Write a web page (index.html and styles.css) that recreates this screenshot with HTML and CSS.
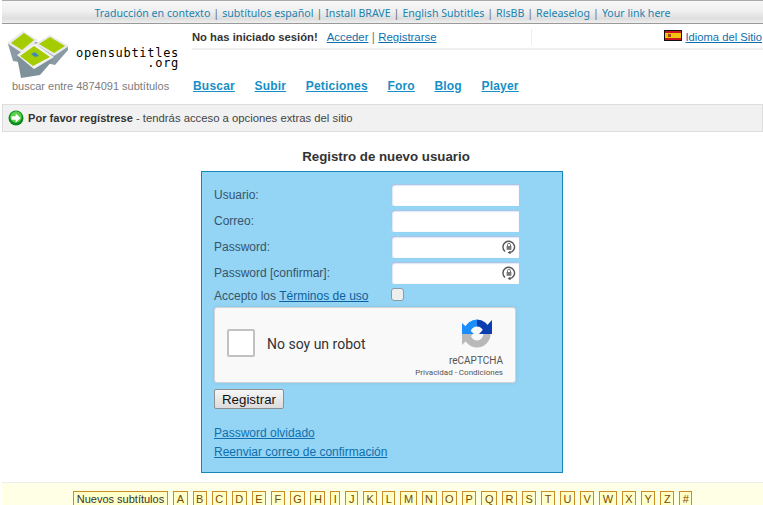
FILE: index.html
```html
<!DOCTYPE html>
<html lang="es">
<head>
<meta charset="utf-8">
<title>Registro de nuevo usuario</title>
<link rel="stylesheet" href="styles.css">
</head>
<body>
<div class="topbar">
  <a>Traducción en contexto</a><i>|</i><a>subtítulos español</a><i>|</i><a>Install BRAVE</a><i>|</i><a>English Subtitles</a><i>|</i><a>RlsBB</a><i>|</i><a>Releaselog</a><i>|</i><a>Your link here</a>
</div>
<header class="head">
  <div class="brand">
    <div class="logo">
      <svg class="logo-mark" viewBox="5 28 70 52" width="70" height="52">
        <g>
          <polygon points="8,44 13,61 30,64 38,42" fill="#8a9ba3"/>
          <polygon points="7,43 23,31 38,40 22,53" fill="#e9e9e9"/>
          <polygon points="11,43 24,33 34,40 22,50" fill="#a4cc00"/>
        </g>
        <g>
          <polygon points="37,46 42,62 55,65 68,50 68,46" fill="#8a9ba3"/>
          <polygon points="35,44 50,35 69,46 54,56" fill="#e9e9e9"/>
          <polygon points="39,44 50,37 65,46 54,53" fill="#a4cc00"/>
        </g>
        <g>
          <polygon points="17,57 21,78 40,75 53,60" fill="#7f929b"/>
          <polygon points="17,55 34,43 54,57 34,69" fill="#f2f2f2"/>
          <polygon points="20,56 34,46 50,57 33,66" fill="#a4cc00"/>
          <polygon points="31,54 35,52 39,56 35,57" fill="#3a8ac0"/>
        </g>
      </svg>
      <div class="wordmark"><span>opensubtitles</span><span class="org">.org</span></div>
    </div>
    <p class="count">buscar entre 4874091 subtítulos</p>
  </div>
  <div class="head-main">
    <div class="userline">
      <div class="login"><b>No has iniciado sesión!</b><a>Acceder</a> <span class="sep">|</span> <a class="reg">Registrarse</a></div>
      <div class="lang">
        <svg class="flag" viewBox="0 0 18 11" width="18" height="11">
          <rect width="18" height="11" fill="#111"/>
          <rect x="1" y="1" width="16" height="9" fill="#c9161d"/>
          <rect x="1" y="3" width="16" height="5" fill="#f4c20d"/>
          <rect x="4" y="4" width="3" height="3" fill="#a5491c"/>
        </svg>
        <a>Idioma del Sitio</a>
      </div>
    </div>
    <nav class="nav"><a>Buscar</a><a>Subir</a><a>Peticiones</a><a>Foro</a><a>Blog</a><a>Player</a></nav>
  </div>
</header>
<div class="notice">
  <svg class="notice-icon" viewBox="0 0 16 16" width="16" height="16">
    <circle cx="8" cy="8" r="7.5" fill="#0a8a1c"/>
    <circle cx="8" cy="7" r="5.8" fill="#57d04a"/>
    <path d="M3.5 6.2h4.2V3.4L12.6 8l-4.9 4.6V9.8H3.5z" fill="#fff"/>
  </svg>
  <p><b>Por favor regístrese</b> - tendrás acceso a opciones extras del sitio</p>
</div>
<main class="main">
  <h1 class="title">Registro de nuevo usuario</h1>
  <form class="box">
    <div class="grid">
      <label>Usuario:</label><span class="field"></span>
      <label>Correo:</label><span class="field"></span>
      <label>Password:</label>
      <span class="field">
        <svg class="lock" viewBox="0 0 14 14" width="14" height="14">
          <path d="M3 11.5A5.8 5.8 0 1 1 7.5 12.8" fill="none" stroke="#555" stroke-width="1.4"/>
          <path d="M8.5 10.8v3.4L5.6 12.5z" fill="#555"/>
          <rect x="4.6" y="6" width="4.8" height="3.8" fill="#777"/>
          <path d="M5.5 6V4.8a1.5 1.5 0 0 1 3 0V6" fill="none" stroke="#777"/>
        </svg>
      </span>
      <label>Password [confirmar]:</label>
      <span class="field">
        <svg class="lock" viewBox="0 0 14 14" width="14" height="14">
          <path d="M3 11.5A5.8 5.8 0 1 1 7.5 12.8" fill="none" stroke="#555" stroke-width="1.4"/>
          <path d="M8.5 10.8v3.4L5.6 12.5z" fill="#555"/>
          <rect x="4.6" y="6" width="4.8" height="3.8" fill="#777"/>
          <path d="M5.5 6V4.8a1.5 1.5 0 0 1 3 0V6" fill="none" stroke="#777"/>
        </svg>
      </span>
      <label class="terms">Accepto los <a>Términos de uso</a></label><span class="check"></span>
    </div>
    <div class="captcha">
      <span class="cbox"></span>
      <span class="robot">No soy un robot</span>
      <div class="rc">
        <svg class="rc-logo" viewBox="0 0 32 32" width="32" height="32">
          <path d="M16 6A10 10 0 0 0 6.5 13" fill="none" stroke="#1c8dfb" stroke-width="7"/>
          <polygon points="1,6 1,17 13,17" fill="#1c8dfb"/>
          <path d="M16 6A10 10 0 0 1 25.5 13" fill="none" stroke="#0b3fb0" stroke-width="7"/>
          <polygon points="31,3 31,17 18,17" fill="#0b3fb0"/>
          <path d="M26 17A10 10 0 0 1 6 17" fill="none" stroke="#b9b9b9" stroke-width="7"/>
          <polygon points="1,17 1,28 12,17" fill="#b9b9b9"/>
        </svg>
        <span class="rc-name">reCAPTCHA</span>
        <span class="rc-links">Privacidad - Condiciones</span>
      </div>
    </div>
    <button class="btn" type="button">Registrar</button>
    <div class="links"><a>Password olvidado</a><a>Reenviar correo de confirmación</a></div>
  </form>
</main>
<footer class="foot">
  <a class="wide">Nuevos subtítulos</a><a>A</a><a>B</a><a>C</a><a>D</a><a>E</a><a>F</a><a>G</a><a>H</a><a>I</a><a>J</a><a>K</a><a>L</a><a>M</a><a>N</a><a>O</a><a>P</a><a>Q</a><a>R</a><a>S</a><a>T</a><a>U</a><a>V</a><a>W</a><a>X</a><a>Y</a><a>Z</a><a>#</a>
</footer>
</body>
</html>
```

FILE: styles.css
```css
html, body {
  margin: 0;
  height: 505px;
  overflow: hidden;
  background: #fff;
}
body {
  font-family: "Liberation Sans", Arial, sans-serif;
  font-size: 12px;
  color: #444;
}
a { cursor: pointer; }
p { margin: 0; }

.topbar {
  height: 21px;
  padding-top: 1px;
  margin-left: 2px;
  border-top: 1px solid #aaa;
  border-bottom: 1px solid #999;
  background: linear-gradient(#f7f7f7, #f0f0f0 45%, #dedede 80%, #efefef);
  display: flex;
  justify-content: center;
  align-items: center;
  font-family: "Noto Sans", sans-serif;
  font-size: 10.6px;
  color: #1a82b0;
  white-space: nowrap;
}
.topbar i {
  font-style: normal;
  color: #666;
  margin: 0 3px;
}

.head {
  display: flex;
  height: 80px;
}
.brand {
  width: 192px;
  flex: none;
}
.logo {
  display: flex;
  height: 51px;
  padding: 4px 0 0 5px;
}
.logo-mark { flex: none; }
.wordmark {
  display: flex;
  flex-direction: column;
  align-items: flex-end;
  margin: 20px 0 0 1px;
  width: 103px;
  font-family: "DejaVu Sans Mono", monospace;
  font-size: 12px;
  letter-spacing: 0.7px;
  line-height: 10px;
  color: #000;
  white-space: nowrap;
}
.count {
  margin: 0 0 0 12px;
  color: #7c7c7c;
  line-height: 14px;
  font-size: 11px;
}

.head-main {
  flex: 1;
  min-width: 0;
}
.userline {
  display: flex;
  height: 24px;
  border-bottom: 2px solid #f0f0f0;
  font-size: 12px;
}
.login {
  width: 339px;
  height: 16px;
  margin-top: 5px;
  border-right: 1px solid #eee;
  line-height: 16px;
  color: #1a82b0;
  white-space: nowrap;
}
.login b { color: #333; font-size: 11.25px; margin-right: 9px; }
.login a { color: #0f6fae; text-decoration: underline; font-size: 11.4px; }
.sep { color: #777; }
.lang {
  flex: 1;
  display: flex;
  justify-content: flex-end;
  align-items: flex-start;
  margin-top: 5px;
  line-height: 16px;
  font-size: 11.2px;
  white-space: nowrap;
  margin-right: 1px;
}
.lang a { color: #0f6fae; text-decoration: underline; }
.flag { margin: 1px 4px 0 0; }

.nav {
  display: flex;
  margin-top: 29px;
  padding-left: 1px;
  font-weight: bold;
  font-size: 12px;
  letter-spacing: 0.2px;
  line-height: 14px;
}
.nav a {
  color: #168fc6;
  text-decoration: underline;
  margin-right: 19.6px;
}

.notice {
  height: 26px;
  margin-left: 2px;
  border: 1px solid #ddd;
  background: #f1f1f1;
  display: flex;
  align-items: center;
  padding-left: 5px;
  font-size: 11.3px;
  color: #444;
}
.notice b { font-size: 11.1px; color: #333; }
.notice-icon { margin-right: 4px; flex: none; }

.main {
  display: flex;
  flex-direction: column;
  align-items: center;
  padding-left: 1px;
}
.title {
  margin: 17px 0 0;
  font-size: 13.3px;
  line-height: 16px;
  color: #333;
  transform: translateX(4px);
}
.box {
  width: 348px;
  height: 288px;
  margin-top: 6px;
  padding: 12px 0 0 12px;
  border: 1px solid #1287b8;
  background: #94d4f4;
  color: #36546a;
}
.grid {
  display: grid;
  grid-template-columns: 177px 128px;
  grid-auto-rows: 22px;
  row-gap: 4px;
  align-items: center;
}
.grid label { line-height: 14px; }
.grid .terms { margin-top: -6px; }
.field {
  height: 22px;
  background: #fff;
  border-radius: 3px 0 0 3px;
  box-shadow: inset 1px 1px 2px #8fb0e0;
  display: flex;
  justify-content: flex-end;
  align-items: center;
  padding-right: 3px;
  box-sizing: border-box;
}
.check {
  width: 11px;
  height: 11px;
  margin-top: -10px;
  background: #eee;
  border: 1px solid #8a9aa8;
  border-radius: 3px;
}
.terms a { color: #0f5f9e; text-decoration: underline; }

.captcha {
  display: flex;
  align-items: center;
  width: 302px;
  height: 76px;
  margin-top: -3px;
  box-sizing: border-box;
  border: 1px solid #d3d3d3;
  border-radius: 3px;
  background: #f9f9f9;
  box-shadow: 0 0 4px rgba(0,0,0,.08);
}
.cbox {
  width: 24px;
  height: 24px;
  margin: -4px 0 0 12px;
  border: 2px solid #c1c1c1;
  border-radius: 2px;
  background: #fff;
}
.robot {
  margin: -2px 0 0 12px;
  font-family: Roboto, "Liberation Sans", sans-serif;
  font-size: 14px;
  color: #333;
}
.rc {
  margin-left: auto;
  margin-right: 12px;
  display: flex;
  flex-direction: column;
  align-items: flex-end;
  height: 72px;
  font-family: Roboto, "Liberation Sans", sans-serif;
}
.rc-logo { margin: 8px 10px 0 0; }
.rc-name { font-size: 10px; line-height: 12px; margin-top: 6px; color: #555; }
.rc-links { font-size: 8px; line-height: 10px; margin-top: 1px; color: #555; white-space: nowrap; }

.btn {
  display: block;
  width: 70px;
  height: 20px;
  margin-top: 6px;
  padding: 0;
  font-family: "Liberation Sans", Arial, sans-serif;
  font-size: 13.3px;
  color: #111;
  border: 1px solid #8f8f8f;
  border-radius: 2px;
  background: linear-gradient(#f6f6f6, #dcdcdc);
}
.links {
  display: flex;
  flex-direction: column;
  align-items: flex-start;
  margin-top: 17px;
  row-gap: 5px;
  line-height: 14px;
}
.links a { color: #0f6fae; text-decoration: underline; }

.foot {
  position: absolute;
  left: 2px;
  right: 0;
  top: 482px;
  height: 23px;
  overflow: hidden;
  box-sizing: border-box;
  border-top: 1px solid #eee;
  background: #ffffe6;
  display: flex;
  justify-content: center;
  align-items: flex-start;
  column-gap: 5px;
  padding: 8px 0 0;
  font-size: 11px;
  color: #7a4a00;
}
.foot a {
  height: 18px;
  box-sizing: border-box;
  border: 1px solid #c98c26;
  background: #ffffc8;
  padding: 0 2.5px;
  text-align: center;
  line-height: 15px;
}
.foot .wide { color: #333; padding: 0 3px; }
```
